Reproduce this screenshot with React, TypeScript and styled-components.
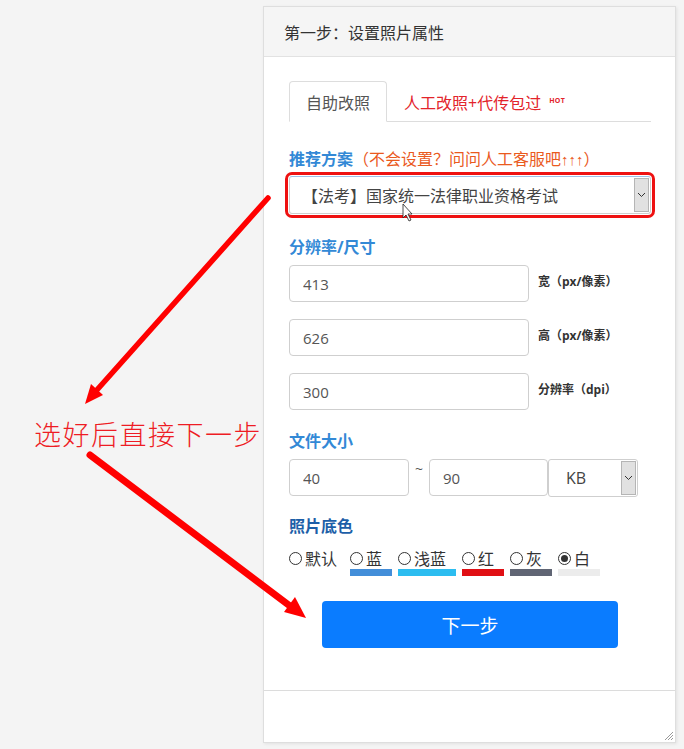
import React, { useState } from "react";
import styled, { createGlobalStyle } from "styled-components";

const GlobalStyle = createGlobalStyle`
  html, body {
    margin: 0;
    padding: 0;
    background: #f4f4f4;
  }
  body {
    font-family: "Open Sans", "Noto Sans CJK SC", sans-serif;
    color: #333;
  }
`;

const Page = styled.div`
  position: relative;
  width: 684px;
  height: 749px;
  overflow: hidden;
  padding: 6px 0 0 263px;
  box-sizing: border-box;
`;

const Panel = styled.div`
  position: relative;
  z-index: 1;
  width: 413px;
  display: flex;
  flex-direction: column;
  background: #fff;
  border: 1px solid #dedede;
  box-shadow: 1px 1px 3px rgba(0, 0, 0, 0.08);
  box-sizing: border-box;
`;

const Card = styled.div`
  display: flex;
  flex-direction: column;
  border-bottom: 1px solid #dcdcdc;
`;

const Header = styled.div`
  height: 49px;
  display: flex;
  align-items: center;
  padding-left: 20px;
  background: #f5f5f5;
  border-bottom: 1px solid #e2e2e2;
  font-size: 16px;
  color: #333;
`;

const Body = styled.div`
  display: flex;
  flex-direction: column;
  padding: 23px 24px 42px 25px;
`;

const Tabs = styled.div`
  display: flex;
  align-items: flex-end;
  height: 41px;
  border-bottom: 1px solid #dddddd;
`;

const Tab = styled.div<{ $active?: boolean; $hot?: boolean }>`
  height: 41px;
  display: flex;
  align-items: center;
  padding: 0 16px;
  box-sizing: border-box;
  font-size: 16px;
  margin-bottom: -1px;
  color: ${(p) => (p.$hot ? "#e3242b" : "#555")};
  background: ${(p) => (p.$active ? "#fff" : "transparent")};
  border: 1px solid ${(p) => (p.$active ? "#dddddd" : "transparent")};
  border-bottom-color: ${(p) => (p.$active ? "#fff" : "transparent")};
  border-radius: 4px 4px 0 0;
`;

const Hot = styled.sup`
  font-size: 7px;
  font-weight: 700;
  color: #e3242b;
  margin-left: 8px;
  letter-spacing: 0.3px;
  position: relative;
  top: -1px;
`;

const Label = styled.div<{ $dark?: boolean; $top?: number; $bottom?: number }>`
  margin-top: ${(p) => p.$top ?? 20}px;
  margin-bottom: ${(p) => p.$bottom ?? 7}px;
  font-size: 16px;
  font-weight: 700;
  line-height: 22px;
  color: ${(p) => (p.$dark ? "#1d5fa8" : "#3389d6")};
`;

const Hint = styled.span`
  font-weight: 400;
  color: #ea5a1e;
`;

const Arrows = styled.span`
  font-family: "Liberation Sans", "DejaVu Sans", sans-serif;
  font-size: 15px;
`;

const SelectBox = styled.div<{ $width?: number; $marked?: boolean }>`
  display: flex;
  align-items: stretch;
  height: 38px;
  width: ${(p) => (p.$width ? `${p.$width}px` : "auto")};
  border: 1px solid #cfcfcf;
  border-top-color: ${(p) => (p.$marked ? "#9ec0e8" : "#cfcfcf")};
  border-radius: 3px;
  background: #fff;
  box-sizing: border-box;
  outline: ${(p) => (p.$marked ? "3px solid #ee1111" : "none")};
  outline-offset: 1px;
`;

const SelectValue = styled.div<{ $pad?: number }>`
  flex: 1;
  display: flex;
  align-items: center;
  padding-left: ${(p) => p.$pad ?? 12}px;
  font-size: 16px;
  color: #444;
`;

const ArrowBox = styled.div`
  width: 15px;
  margin: 1px;
  display: flex;
  align-items: center;
  justify-content: center;
  background: #e1e1e1;
  border: 1px solid #b5b5b5;
  box-sizing: border-box;
`;

const FieldRow = styled.div`
  display: flex;
  align-items: flex-start;
  gap: 9px;
  & + & {
    margin-top: 17px;
  }
`;

const Input = styled.input<{ $width: number }>`
  width: ${(p) => p.$width}px;
  height: 37px;
  box-sizing: border-box;
  padding: 0 13px;
  border: 1px solid #cfcfcf;
  border-radius: 4px;
  font-family: "Open Sans", "Noto Sans CJK SC", sans-serif;
  font-size: 15px;
  color: #555;
  outline: none;
`;

const Unit = styled.span`
  padding-top: 7px;
  font-size: 12px;
  font-weight: 700;
  color: #333;
`;

const SizeRow = styled.div`
  display: flex;
  align-items: flex-start;
`;

const Tilde = styled.span`
  width: 20px;
  text-align: center;
  font-size: 14px;
  line-height: 20px;
  color: #555;
`;

const Swatches = styled.div`
  display: flex;
  align-items: flex-start;
  gap: 6px;
  margin-top: 3px;
`;

const Option = styled.label<{ $first?: boolean }>`
  display: flex;
  flex-direction: column;
  margin-right: ${(p) => (p.$first ? -3 : 0)}px;
  cursor: pointer;
`;

const OptionText = styled.span`
  display: flex;
  align-items: center;
  gap: 3px;
  height: 22px;
  padding-right: 10px;
  font-size: 16px;
  color: #333;
`;

const Radio = styled.span<{ $on?: boolean }>`
  width: 13px;
  height: 13px;
  box-sizing: border-box;
  border: 1px solid #333;
  border-radius: 50%;
  display: flex;
  align-items: center;
  justify-content: center;
  &::after {
    content: "";
    display: ${(p) => (p.$on ? "block" : "none")};
    width: 7px;
    height: 7px;
    border-radius: 50%;
    background: #333;
  }
`;

const Swatch = styled.span<{ $color: string }>`
  display: block;
  height: 7px;
  background: ${(p) => p.$color};
`;

const NextButton = styled.button`
  align-self: center;
  margin-top: 25px;
  width: 296px;
  height: 47px;
  border: 0;
  border-radius: 4px;
  background: #0a7cff;
  color: #fff;
  font-family: "Open Sans", "Noto Sans CJK SC", sans-serif;
  font-size: 19px;
  cursor: pointer;
`;

const Notes = styled.div`
  position: relative;
  height: 51px;
  background: #fff;
`;

const Grip = styled.svg`
  position: absolute;
  right: 1px;
  bottom: 1px;
`;

const Callout = styled.div`
  position: absolute;
  z-index: 0;
  left: 34px;
  top: 414px;
  font-family: "Noto Sans CJK SC", sans-serif;
  font-weight: 300;
  font-size: 27px;
  letter-spacing: 1.5px;
  color: #ee1c24;
  white-space: nowrap;
`;

const Overlay = styled.svg`
  position: absolute;
  z-index: 2;
  left: 0;
  top: 0;
  pointer-events: none;
`;

const Chevron = () => (
  <svg width="9" height="6" viewBox="0 0 9 6">
    <path d="M1 1l3.5 3.5L8 1" fill="none" stroke="#333" strokeWidth="1" />
  </svg>
);

const colors = [
  { name: "默认", swatch: "" },
  { name: "蓝", swatch: "#438ed9" },
  { name: "浅蓝", swatch: "#2cbdf0" },
  { name: "红", swatch: "#e00f14" },
  { name: "灰", swatch: "#606574" },
  { name: "白", swatch: "#ececec" },
];

const App = () => {
  const [bg, setBg] = useState("白");

  return (
    <Page>
      <GlobalStyle />
      <Callout>选好后直接下一步</Callout>
      <Panel>
        <Card>
          <Header>第一步：设置照片属性</Header>
          <Body>
            <Tabs>
              <Tab $active>自助改照</Tab>
              <Tab $hot>
                人工改照+代传包过<Hot>HOT</Hot>
              </Tab>
            </Tabs>

            <Label $top={26} $bottom={5}>
              推荐方案
              <Hint>
                （不会设置？问问人工客服吧<Arrows>↑↑↑</Arrows>）
              </Hint>
            </Label>
            <SelectBox $marked>
              <SelectValue>【法考】国家统一法律职业资格考试</SelectValue>
              <ArrowBox>
                <Chevron />
              </ArrowBox>
            </SelectBox>

            <Label $top={22}>分辨率/尺寸</Label>
            <FieldRow>
              <Input $width={240} defaultValue="413" />
              <Unit>宽（px/像素）</Unit>
            </FieldRow>
            <FieldRow>
              <Input $width={240} defaultValue="626" />
              <Unit>高（px/像素）</Unit>
            </FieldRow>
            <FieldRow>
              <Input $width={240} defaultValue="300" />
              <Unit>分辨率（dpi）</Unit>
            </FieldRow>

            <Label>文件大小</Label>
            <SizeRow>
              <Input $width={120} defaultValue="40" />
              <Tilde>~</Tilde>
              <Input $width={119} defaultValue="90" />
              <SelectBox $width={90}>
                <SelectValue $pad={17}>KB</SelectValue>
                <ArrowBox>
                  <Chevron />
                </ArrowBox>
              </SelectBox>
            </SizeRow>

            <Label $dark $top={18}>
              照片底色
            </Label>
            <Swatches>
              {colors.map((c, i) => (
                <Option key={c.name} $first={i === 0} onClick={() => setBg(c.name)}>
                  <OptionText>
                    <Radio $on={bg === c.name} />
                    {c.name}
                  </OptionText>
                  {c.swatch && <Swatch $color={c.swatch} />}
                </Option>
              ))}
            </Swatches>

            <NextButton>下一步</NextButton>
          </Body>
        </Card>
        <Notes>
          <Grip width="12" height="12" viewBox="0 0 12 12">
            <path d="M11 3L3 11M11 6L6 11M11 9L9 11" stroke="#999" strokeWidth="1" />
          </Grip>
        </Notes>
      </Panel>

      <Overlay width="684" height="749" viewBox="0 0 684 749">
        {/* arrow up to the scheme select */}
        <line x1="268" y1="198" x2="96" y2="391" stroke="#f00" strokeWidth="5.5" strokeLinecap="round" />
        <polygon points="85,404 103,395 91,384" fill="#f00" />
        {/* arrow down to the next-step button */}
        <line x1="90" y1="455" x2="290" y2="606" stroke="#f00" strokeWidth="7" strokeLinecap="round" />
        <polygon points="306,618 284,612 295,597" fill="#f00" />
        {/* mouse pointer */}
        <path
          d="M403 204 L403 218 L406 215 L409 221 L411 220 L408 214 L412 214 Z"
          fill="#fff"
          stroke="#222"
          strokeWidth="0.8"
        />
      </Overlay>
    </Page>
  );
};

export default App;
